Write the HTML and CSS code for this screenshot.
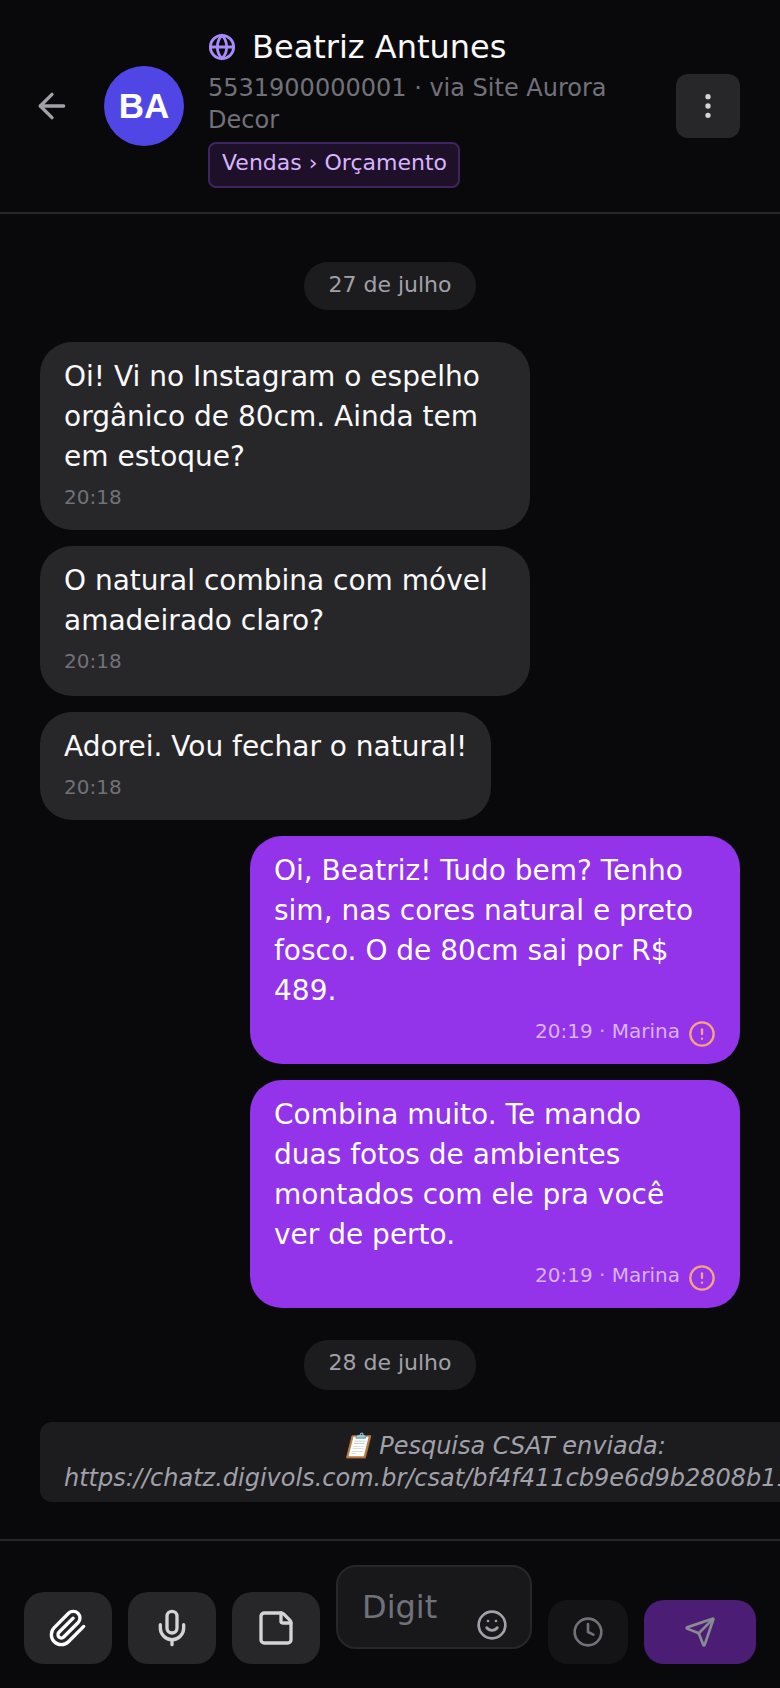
FILE: index.html
```html
<!DOCTYPE html>
<html lang="pt-BR">
<head>
<meta charset="utf-8">
<title>Beatriz Antunes</title>
<link rel="stylesheet" href="styles.css">
</head>
<body>
<div class="app">
  <header class="header">
    <button class="back" aria-label="Voltar">
      <svg class="icon-back" viewBox="0 0 24 24"><path d="m12 19-7-7 7-7"/><path d="M19 12H5"/></svg>
    </button>
    <div class="avatar">BA</div>
    <div class="contact">
      <div class="name-row">
        <svg class="icon-globe" viewBox="0 0 24 24"><circle cx="12" cy="12" r="10"/><path d="M12 2a14.5 14.5 0 0 0 0 20 14.5 14.5 0 0 0 0-20"/><path d="M2 12h20"/></svg>
        <span class="name">Beatriz Antunes</span>
      </div>
      <div class="sub">5531900000001 · via Site Aurora Decor</div>
      <span class="tag">Vendas › Orçamento</span>
    </div>
    <button class="menu" aria-label="Mais">
      <svg class="icon-menu" viewBox="0 0 24 24"><circle cx="12" cy="12" r="1"/><circle cx="12" cy="5" r="1"/><circle cx="12" cy="19" r="1"/></svg>
    </button>
  </header>

  <main class="messages">
    <div class="date"><span>27 de julho</span></div>
    <div class="bubble in">
      <p>Oi! Vi no Instagram o espelho orgânico de 80cm. Ainda tem em estoque?</p>
      <div class="meta">20:18</div>
    </div>
    <div class="bubble in bubble-roomy">
      <p>O natural combina com móvel amadeirado claro?</p>
      <div class="meta">20:18</div>
    </div>
    <div class="bubble in">
      <p>Adorei. Vou fechar o natural!</p>
      <div class="meta">20:18</div>
    </div>
    <div class="bubble out">
      <p>Oi, Beatriz! Tudo bem? Tenho sim, nas cores natural e preto fosco. O de 80cm sai por R$ 489.</p>
      <div class="meta"><span>20:19 · Marina</span>
        <svg class="icon-alert" viewBox="0 0 24 24"><circle cx="12" cy="12" r="10"/><path d="M12 8v4"/><path d="M12 16h.01"/></svg>
      </div>
    </div>
    <div class="bubble out">
      <p>Combina muito. Te mando duas fotos de ambientes montados com ele pra você ver de perto.</p>
      <div class="meta"><span>20:19 · Marina</span>
        <svg class="icon-alert" viewBox="0 0 24 24"><circle cx="12" cy="12" r="10"/><path d="M12 8v4"/><path d="M12 16h.01"/></svg>
      </div>
    </div>
    <div class="date date-second"><span>28 de julho</span></div>
    <div class="system">📋 Pesquisa CSAT enviada:<br>https://chatz.digivols.com.br/csat/bf4f411cb9e6d9b2808b11a47e25d301</div>
  </main>

  <footer class="composer">
    <button class="tool tool-light" aria-label="Anexar">
      <svg viewBox="0 0 24 24"><path d="m21.44 11.05-9.19 9.19a6 6 0 0 1-8.49-8.49l8.57-8.57A4 4 0 1 1 18 8.84l-8.59 8.57a2 2 0 0 1-2.83-2.83l8.49-8.48"/></svg>
    </button>
    <button class="tool" aria-label="Gravar">
      <svg viewBox="0 0 24 24"><path d="M12 19v3"/><path d="M19 10v2a7 7 0 0 1-14 0v-2"/><rect x="9" y="2" width="6" height="13" rx="3"/></svg>
    </button>
    <button class="tool" aria-label="Arquivo">
      <svg viewBox="0 0 24 24"><path d="M21 9a2.4 2.4 0 0 0-.706-1.706l-3.588-3.588A2.4 2.4 0 0 0 15 3H5a2 2 0 0 0-2 2v14a2 2 0 0 0 2 2h14a2 2 0 0 0 2-2z"/><path d="M15 3v5a1 1 0 0 0 1 1h5"/></svg>
    </button>
    <div class="input">
      <span class="placeholder">Digit</span>
      <svg class="icon-smile" viewBox="0 0 24 24"><circle cx="12" cy="12" r="10"/><path d="M8 14s1.5 2 4 2 4-2 4-2"/><path d="M9 9h.01"/><path d="M15 9h.01"/></svg>
    </div>
    <button class="clock" aria-label="Agendar">
      <svg viewBox="0 0 24 24"><circle cx="12" cy="12" r="10"/><path d="M12 6v6l4 2"/></svg>
    </button>
    <button class="send" aria-label="Enviar">
      <svg viewBox="0 0 24 24"><path d="M14.536 21.686a.5.5 0 0 0 .937-.024l6.5-19a.496.496 0 0 0-.635-.635l-19 6.5a.5.5 0 0 0-.024.937l7.93 3.18a2 2 0 0 1 1.112 1.11z"/><path d="m21.854 2.147-10.94 10.939"/></svg>
    </button>
  </footer>
</div>
</body>
</html>
```
FILE: styles.css
```css
* { box-sizing: border-box; }
html, body { margin: 0; height: 100%; background: #09090b; }
body { font-family: "DejaVu Sans", sans-serif; color: #fafafa; overflow: hidden; }
svg { fill: none; stroke: currentColor; stroke-width: 2; stroke-linecap: round; stroke-linejoin: round; display: block; }
button { border: 0; padding: 0; display: flex; align-items: center; justify-content: center; font: inherit; }

.app { width: 780px; height: 1688px; display: flex; flex-direction: column; }

.header { height: 214px; flex: none; display: flex; align-items: center; padding: 0 40px 0 32px; border-bottom: 2px solid #27272a; }
.back { width: 40px; height: 40px; background: none; color: #a1a1aa; margin-right: 32px; }
.icon-back { width: 40px; height: 40px; }
.avatar { width: 80px; height: 80px; flex: none; border-radius: 50%; background: #4f46e5; color: #fff; font: 700 35px "Liberation Sans", sans-serif; display: flex; align-items: center; justify-content: center; margin-right: 24px; }
.contact { flex: 1; min-width: 0; display: flex; flex-direction: column; align-items: flex-start; }
.name-row { display: flex; align-items: center; gap: 16px; height: 48px; margin-top: -1px; margin-bottom: 1px; }
.icon-globe { width: 28px; height: 28px; color: #a78bfa; stroke-width: 2.4; }
.name { font-size: 32px; color: #fafafa; }
.sub { font-size: 24px; line-height: 32px; color: #71717a; width: 420px; }
.tag { margin-top: 6px; height: 46px; padding: 0 11px 5px 12px; display: flex; align-items: center; font-size: 22px; color: #d8b4fe; background: #1f1029; border: 2px solid #3f2560; border-radius: 8px; }
.menu { width: 64px; height: 64px; flex: none; background: #27272a; border-radius: 12px; color: #d4d4d8; }
.icon-menu { width: 32px; height: 32px; }

.messages { flex: 1; min-height: 0; overflow: hidden; padding: 48px 0 0 40px; display: flex; flex-direction: column; gap: 16px; }
.date { display: flex; justify-content: center; padding-right: 40px; margin-bottom: 16px; }
.date span { height: 48px; padding: 0 24px 4px; border-radius: 24px; background: #1c1c1f; color: #a1a1aa; font-size: 22px; display: flex; align-items: center; }
.date-second { margin-top: 16px; margin-bottom: 16px; }
.date-second span { height: 50px; padding-bottom: 6px; }

.bubble { max-width: 490px; padding: 15px 24px 19px; border-radius: 32px; align-self: flex-start; }
.bubble-roomy { padding-bottom: 21px; }
.bubble p { margin: 0; font-size: 28px; line-height: 40px; }
.in { background: #27272a; color: #fafafa; }
.out { background: #9333ea; color: #fff; align-self: flex-end; margin-right: 40px; width: 490px; }
.meta { font-size: 20px; line-height: 28px; margin-top: 6px; color: #71717a; display: flex; align-items: center; }
.out .meta { justify-content: flex-end; gap: 8px; color: #d8b4fe; }
.icon-alert { width: 28px; height: 28px; color: #f8a27e; margin-top: 3px; margin-bottom: -3px; }

.system { align-self: flex-start; flex: none; white-space: nowrap; text-align: center; padding: 8px 24px; border-radius: 12px; background: #1c1c1f; color: #a1a1aa; font-size: 24px; line-height: 32px; font-style: italic; }

.composer { height: 149px; flex: none; border-top: 2px solid #27272a; padding: 0 24px 24px; display: flex; align-items: flex-end; gap: 16px; background: #09090b; }
.tool { width: 88px; height: 72px; flex: none; border-radius: 20px; background: #27272a; color: #d4d4d8; }
.tool-light { color: #fff; }
.tool svg { width: 40px; height: 40px; }
.input { width: 196px; height: 84px; flex: none; margin-bottom: 15px; padding: 0 24px; position: relative; border: 2px solid #27272a; border-radius: 20px; background: #18181b; display: flex; align-items: center; }
.placeholder { font-size: 32px; color: #71717a; }
.icon-smile { width: 32px; height: 32px; color: #a1a1aa; position: absolute; right: 22px; bottom: 6px; }
.clock { width: 80px; height: 64px; flex: none; border-radius: 20px; background: #141416; color: #71717a; }
.clock svg, .send svg { width: 32px; height: 32px; }
.send { width: 112px; height: 64px; flex: none; border-radius: 20px; background: #4c1d75; color: #8a8a92; }
```
